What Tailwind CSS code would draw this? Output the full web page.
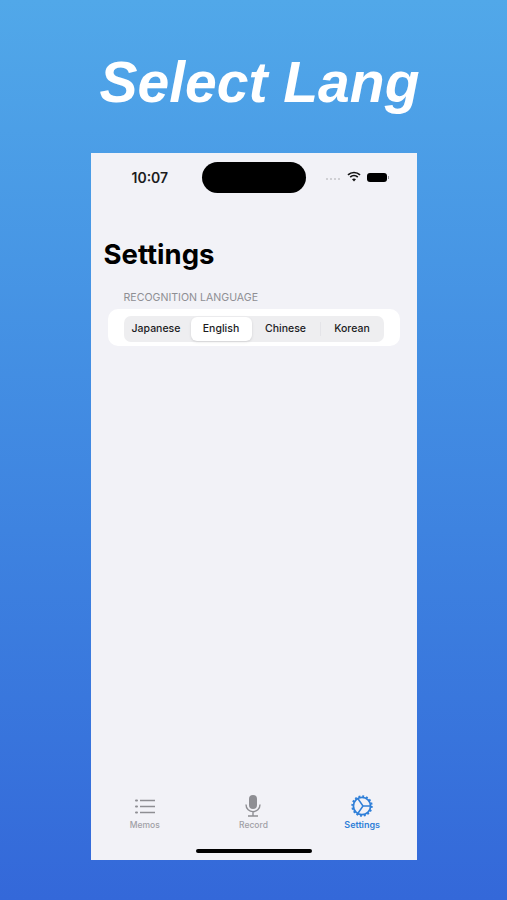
<!DOCTYPE html>
<html lang="en">
<head>
    <meta charset="UTF-8">
    <meta name="viewport" content="width=device-width, initial-scale=1.0">
    <title>Select Lang</title>
    <script src="https://cdn.jsdelivr.net/npm/@tailwindcss/browser@4"></script>
</head>
<body class="m-0">
    <div class="w-[507px] h-[900px] flex flex-col items-center overflow-hidden bg-gradient-to-b from-[#51a8e9] to-[#3468d9]">
        <!-- Headline -->
        <h1 class="mt-[47px] ml-[12px] h-[70px] text-[57px] leading-[70px] font-bold italic text-white font-['Liberation_Sans',sans-serif]">Select Lang</h1>

        <!-- Phone screen -->
        <div class="mt-[36px] w-[326px] h-[707px] flex flex-col bg-[#f2f2f7] font-['Inter',sans-serif]">
            <!-- Status bar -->
            <div class="relative h-[48px] pt-[9px] flex items-start">
                <span class="w-[111px] pl-[41px] h-[31px] leading-[31px] text-[14px] font-semibold text-[#1c1c1e]">10:07</span>
                <div class="w-[104px] h-[31px] rounded-full bg-black"></div>
                <div class="ml-[20px] h-[31px] flex items-center">
                    <div class="flex gap-[2px] mr-[7px] mt-[3px]">
                        <span class="w-[2px] h-[2px] rounded-full bg-[#c4c4c8]"></span>
                        <span class="w-[2px] h-[2px] rounded-full bg-[#c4c4c8]"></span>
                        <span class="w-[2px] h-[2px] rounded-full bg-[#c4c4c8]"></span>
                        <span class="w-[2px] h-[2px] rounded-full bg-[#c4c4c8]"></span>
                    </div>
                    <svg width="14" height="11" viewBox="0 0 14 11" class="mb-[2px]">
                        <path d="M1 3.9C4.4.7 9.6.7 13 3.9" fill="none" stroke="#111" stroke-width="1.7"/>
                        <path d="M3.2 6.2C5.4 4.2 8.6 4.2 10.8 6.2" fill="none" stroke="#111" stroke-width="1.7"/>
                        <path d="M5 8.2C6.2 7.2 7.8 7.2 9 8.2L7 10.5Z" fill="#111"/>
                    </svg>
                    <div class="ml-[6px] mb-[1px] w-[20px] h-[9px] rounded-[3px] bg-black"></div>
                    <div class="ml-[1px] mb-[1px] w-[1px] h-[3px] bg-[#9a9a9e]"></div>
                </div>
            </div>

            <!-- Title -->
            <h2 class="mt-[35px] pl-[13px] h-[36px] leading-[36px] text-[27.5px] font-bold text-black">Settings</h2>

            <!-- Recognition language -->
            <p class="mt-[18px] pl-[33px] h-[16px] leading-[16px] text-[10.6px] text-[#8e8e93]">RECOGNITION LANGUAGE</p>
            <div class="mt-[3px] ml-[17px] w-[292px] h-[37px] rounded-[10px] bg-white pl-[16px] pt-[7px]">
                <div class="w-[260px] h-[26px] rounded-[7px] bg-[#eeeef0] flex items-center text-[10.5px] font-medium text-[#1c1c1e]">
                    <span class="w-[65px] text-center">Japanese</span>
                    <span class="ml-[2px] w-[61px] h-[24px] leading-[24px] text-center rounded-[6px] bg-white shadow-sm">English</span>
                    <span class="w-[68px] text-center">Chinese</span>
                    <span class="w-[1px] h-[14px] bg-[#e4e4e8]"></span>
                    <span class="w-[63px] text-center">Korean</span>
                </div>
            </div>

            <!-- Tab bar -->
            <div class="mt-auto grid grid-cols-3 h-[40px]">
                <div class="flex flex-col items-center">
                    <svg width="20" height="17" viewBox="0 0 20 17" fill="none" stroke="#8e8e93">
                        <path d="M5 2.5H20M5 8.5H20M5 14.5H20" stroke-width="1.7"/>
                        <path d="M1 2.5H2M1 8.5H2M1 14.5H2" stroke-width="2" stroke-linecap="round"/>
                    </svg>
                    <span class="mt-[4px] text-[8.5px] leading-[12px] font-medium text-[#a0a0a6]">Memos</span>
                </div>
                <div class="flex flex-col items-center">
                    <svg width="18" height="22" viewBox="0 0 18 22" fill="none" class="-mt-[3px]" stroke="#8e8e93">
                        <rect x="5" y="0" width="8" height="14" rx="4" fill="#8e8e93" stroke="none"/>
                        <path d="M2 9.5C2 19 16 19 16 9.5M9 16.5V20.5M4 21H14" stroke-width="1.4"/>
                    </svg>
                    <span class="mt-[2px] text-[8.5px] leading-[12px] font-medium text-[#a0a0a6]">Record</span>
                </div>
                <div class="flex flex-col items-center">
                    <svg width="22" height="22" viewBox="0 0 22 22" fill="none" class="-mt-[3px]" stroke="#2f7fd8">
                        <circle cx="11" cy="11" r="8.6" stroke-width="1.8"/>
                        <circle cx="11" cy="11" r="9.8" stroke-width="1.8" stroke-dasharray="1.9 1.95"/>
                        <path d="M7 3.8L12 11L7 18.2M12 11H19" stroke-width="1.5"/>
                    </svg>
                    <span class="mt-[2px] text-[9px] leading-[12px] font-semibold text-[#2f7fd8]">Settings</span>
                </div>
            </div>

            <!-- Home indicator -->
            <div class="mt-[11px] mb-[7px] mx-auto w-[116px] h-[4px] rounded-full bg-black"></div>
        </div>
    </div>
</body>
</html>
